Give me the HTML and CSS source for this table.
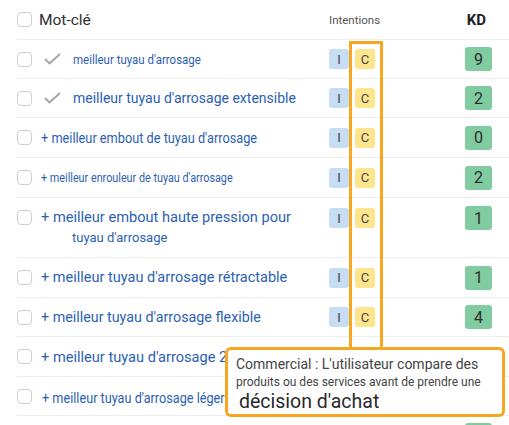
FILE: index.html
```html
<!DOCTYPE html>
<html lang="fr">
<head>
<meta charset="utf-8">
<title>Mots-clés</title>
<link rel="stylesheet" href="styles.css">
</head>
<body>
<div class="page">
  <div class="table">
    <div class="row head">
      <span class="box"></span>
      <span class="kw-head">Mot-clé</span>
      <span class="int-head">Intentions</span>
      <span class="kd-head">KD</span>
    </div>

    <div class="row">
      <span class="box"></span>
      <span class="kw"><svg class="check" width="17" height="12" viewBox="0 0 17 12"><path d="M1 6 L5.5 10.5 L16 1" fill="none" stroke="#a3a3a3" stroke-width="1.8"/></svg><a class="link r1">meilleur tuyau d'arrosage</a></span>
      <span class="intents"><b class="tag i">I</b><b class="tag c">C</b></span>
      <span class="kd"><b class="score">9</b></span>
    </div>

    <div class="row">
      <span class="box"></span>
      <span class="kw"><svg class="check" width="17" height="12" viewBox="0 0 17 12"><path d="M1 6 L5.5 10.5 L16 1" fill="none" stroke="#a3a3a3" stroke-width="1.8"/></svg><a class="link r2">meilleur tuyau d'arrosage extensible</a></span>
      <span class="intents"><b class="tag i">I</b><b class="tag c">C</b></span>
      <span class="kd"><b class="score">2</b></span>
    </div>

    <div class="row r40">
      <span class="box"></span>
      <span class="kw"><a class="link r3">+ meilleur embout de tuyau d'arrosage</a></span>
      <span class="intents"><b class="tag i">I</b><b class="tag c">C</b></span>
      <span class="kd"><b class="score">0</b></span>
    </div>

    <div class="row r40">
      <span class="box"></span>
      <span class="kw"><a class="link r4">+ meilleur enrouleur de tuyau d'arrosage</a></span>
      <span class="intents"><b class="tag i">I</b><b class="tag c">C</b></span>
      <span class="kd"><b class="score">2</b></span>
    </div>

    <div class="row double">
      <span class="box"></span>
      <span class="kw col"><a class="link s15">+ meilleur embout haute pression pour</a><a class="link s13 sub">tuyau d'arrosage</a></span>
      <span class="intents"><b class="tag i">I</b><b class="tag c">C</b></span>
      <span class="kd"><b class="score">1</b></span>
    </div>

    <div class="row r40">
      <span class="box"></span>
      <span class="kw"><a class="link r6">+ meilleur tuyau d'arrosage rétractable</a></span>
      <span class="intents"><b class="tag i">I</b><b class="tag c">C</b></span>
      <span class="kd"><b class="score">1</b></span>
    </div>

    <div class="row">
      <span class="box"></span>
      <span class="kw"><a class="link r7">+ meilleur tuyau d'arrosage flexible</a></span>
      <span class="intents"><b class="tag i">I</b><b class="tag c">C</b></span>
      <span class="kd"><b class="score">4</b></span>
    </div>

    <div class="row r40">
      <span class="box"></span>
      <span class="kw"><a class="link s15">+ meilleur tuyau d'arrosage 20</a></span>
      <span class="intents"></span>
      <span class="kd"></span>
    </div>

    <div class="row">
      <span class="box"></span>
      <span class="kw"><a class="link r9">+ meilleur tuyau d'arrosage léger</a></span>
      <span class="intents"></span>
      <span class="kd"></span>
    </div>

    <div class="row last">
      <span></span>
      <span></span>
      <span></span>
      <span class="kd"><b class="score"></b></span>
    </div>
  </div>

  <div class="highlight"></div>
  <div class="tooltip">
    <p class="t1">Commercial : L'utilisateur compare des</p>
    <p class="t2">produits ou des services avant de prendre une</p>
    <p class="t3">décision d'achat</p>
  </div>
</div>
</body>
</html>
```

FILE: styles.css
```css
html, body {
  margin: 0;
  padding: 0;
  background: #ffffff;
  overflow: hidden;
}

body {
  font-family: Roboto, "Noto Sans", "Liberation Sans", sans-serif;
  color: #333333;
}

.page {
  position: relative;
  width: 509px;
  height: 425px;
  overflow: hidden;
}

.table {
  margin-left: 17px;
}

.row {
  display: grid;
  grid-template-columns: 24px 288px 46px 117px;
  align-items: center;
  height: 39px;
  box-sizing: border-box;
  padding-right: 17px;
  border-top: 1px solid #ececec;
}

.row.r40 { height: 40px; }
.row.double {
  height: 60px;
  align-items: start;
  padding-top: 9px;
}
.row.double .box { margin-top: 3px; }
.row.double .intents { margin-top: 1px; }
.row.double .kd { margin-top: -1px; }
.row.last { height: 40px; align-items: start; padding-top: 7px; }

.row.head {
  border-top: none;
  height: 39px;
}

.box {
  display: block;
  width: 15px;
  height: 15px;
  box-sizing: border-box;
  border: 1px solid #cfcfcf;
  border-radius: 4px;
  background: #fff;
}

.kw-head {
  margin-left: -2px;
  font-size: 15.5px;
  color: #2f2f2f;
  font-weight: 400;
}

.int-head {
  text-align: center;
  font-size: 11.5px;
  color: #555;
  white-space: nowrap;
}

.kd-head {
  justify-self: end;
  margin-right: 6px;
  font-size: 15px;
  font-weight: 700;
  color: #222;
}

.kw {
  display: flex;
  align-items: center;
  white-space: nowrap;
}

.kw.col {
  flex-direction: column;
  align-items: flex-start;
}

.check {
  margin-left: 3px;
  margin-right: 12px;
  flex: none;
}

.link {
  display: inline-block;
  color: #2c5fb3;
  text-decoration: none;
  transform-origin: left center;
}

.s15 { font-size: 14.6px; line-height: 20px; }
.s13 { font-size: 13px; line-height: 22px; }

.r1 { font-size: 13.5px; transform: scaleX(0.85); }
.r2 { font-size: 14px; }
.r3 { font-size: 14px; transform: scaleX(0.91); }
.r4 { font-size: 12px; transform: scaleX(0.9); }
.r6 { font-size: 14.5px; }
.r7 { font-size: 14.3px; }
.r9 { font-size: 15px; transform: scaleX(0.845); margin-left: 1px; margin-top: 3px; }

.sub { margin-left: 31px; }

.intents {
  display: flex;
  gap: 6px;
}

.tag {
  display: flex;
  align-items: center;
  justify-content: center;
  width: 20px;
  height: 20px;
  border-radius: 3px;
  font-weight: 400;
  font-size: 13px;
  color: #444;
}

.tag.i { background: #c7ddf3; }
.tag.c { background: #fce58c; }

.kd {
  display: flex;
  justify-content: flex-end;
}

.score {
  display: flex;
  align-items: center;
  justify-content: center;
  width: 27px;
  height: 24px;
  border-radius: 3px;
  background: #80cb9f;
  font-weight: 400;
  font-size: 16px;
  color: #2e2e2e;
}

.highlight {
  position: absolute;
  left: 349px;
  top: 41px;
  width: 34px;
  height: 309px;
  box-sizing: border-box;
  border: 3.5px solid #f7a621;
  border-radius: 1px;
}

.tooltip {
  position: absolute;
  left: 225px;
  top: 347px;
  width: 280px;
  height: 70px;
  box-sizing: border-box;
  border: 3px solid #f7a621;
  border-radius: 6px;
  background: #ffffff;
  padding: 5px 8px 0 8px;
  color: #444;
}

.tooltip p {
  margin: 0;
  white-space: nowrap;
}

.t1 { font-size: 14px; line-height: 18px; }
.t2 { font-size: 12px; line-height: 19px; }
.t3 { font-size: 19.5px; line-height: 20px; margin-left: 3px !important; color: #2a2a2a; }
```
